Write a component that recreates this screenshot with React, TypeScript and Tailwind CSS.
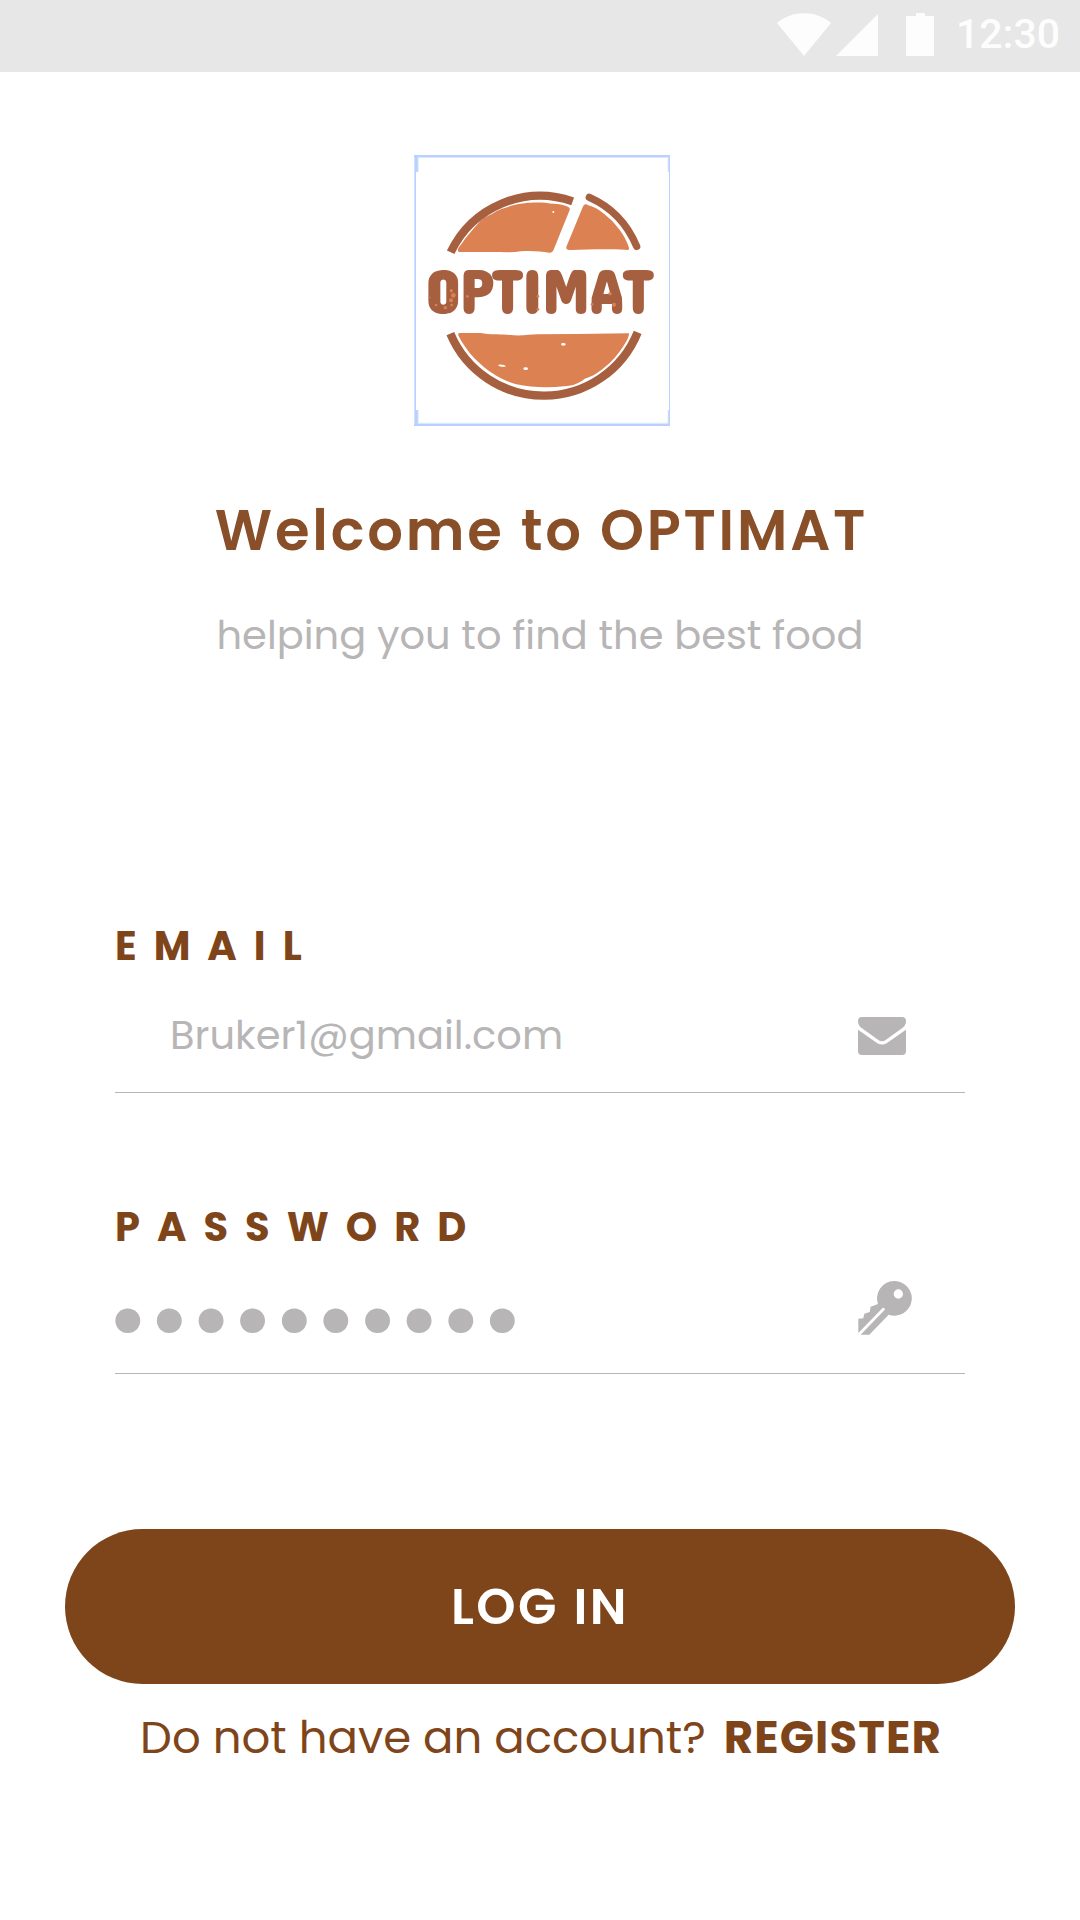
import React from "react";

function StatusBar() {
  return (
    <header className="flex h-[72px] items-center justify-end bg-[#e7e7e7] pr-5 pb-[3px] text-[#fdfdfd]">
      <svg aria-label="Wi-Fi" role="img" className="h-11 w-[54px] shrink-0" viewBox="0 0 54 44" fill="currentColor">
        <path d="M0 10C15-3 39-3 54 10L27 43Z" />
      </svg>
      <svg aria-label="Signal" role="img" className="ml-[5px] h-11 w-[42px] shrink-0" viewBox="0 0 42 44" fill="currentColor">
        <path d="M42 1V43H0Z" />
      </svg>
      <svg aria-label="Battery" role="img" className="ml-7 h-11 w-7 shrink-0" viewBox="0 0 28 44" fill="currentColor">
        <path d="M0 3H10V0H19V3H28V43H0Z" />
      </svg>
      <time className="ml-[22px] font-['Roboto',sans-serif] text-[41px] leading-none font-medium">12:30</time>
    </header>
  );
}

function Logo() {
  return (
    <svg role="img" aria-label="Optimat logo" className="h-[271px] w-64" viewBox="40 45 768 813">
      <path fill="#dbe7fd" d="M48 50H54V96H48ZM801 50H804V96H801ZM48 810H54V852H48ZM801 810H804V852H801ZM48 51H804V54H48ZM48 848H804V852H48Z" />
      <path fill="#b9d1fc" d="M40 45H808V51H40ZM40 852H808V858H40ZM41 45H46V858H41ZM805 45H808V858H805ZM41 45H51V96H41ZM803 45H808V96H803ZM41 810H51V858H41ZM803 810H808V858H803Z" />
      <g fill="#db8152">
        <path d="M174 336C168 328 175 321 183 311C196 291 209 279 222 262C235 248 244 236 260 229C280 220 292 209 310 205C330 197 350 192 372 190C390 187 415 188 435 188C452 192 466 190 484 194C496 198 510 200 507 210L460 326C457 334 453 339 445 338C420 334 390 331 360 334C340 338 320 337 300 336Z" />
        <path d="M498 318L518 270L546 202C550 192 555 191 563 196C593 204 618 227 642 251C662 274 678 299 684 321C687 329 684 331 674 329C620 326 560 328 510 330C498 330 495 326 498 318Z" />
        <path d="M178 579H240C270 585 290 582 320 584C360 590 385 583 410 583L530 582L685 580C685 590 678 605 669 617C653 642 634 664 612 682C590 701 575 709 552 716C535 730 518 737 490 739C440 744 390 742 347 733C300 720 258 691 229 662C205 640 184 608 174 588C171 582 173 579 178 579Z" />
      </g>
      <g fill="none" stroke="#a66040">
        <path strokeWidth="25" d="M150 337A297 297 0 0 1 516 184" />
        <path strokeWidth="22" strokeLinecap="round" d="M566 172C634 202 681 254 708 319" />
        <path strokeWidth="25" d="M149 581A304 304 0 0 0 711 577" />
      </g>
      <g fill="#fff">
        <ellipse cx="458" cy="216" rx="3" ry="3" />
        <ellipse cx="488" cy="613" rx="7" ry="4" />
        <ellipse cx="304" cy="677" rx="11" ry="3" transform="rotate(8 304 677)" />
        <ellipse cx="375" cy="686" rx="7" ry="4" />
      </g>
      <text
        x="417"
        y="519"
        textAnchor="middle"
        fill="#a66040"
        className="font-['Concert_One','Roboto',sans-serif] text-[185px] font-bold"
      >
        OPTIMAT
      </text>
      <g fill="#db8152">
        <circle cx="152" cy="452" r="5" />
        <circle cx="158" cy="466" r="7" />
        <circle cx="151" cy="481" r="6" />
        <circle cx="134" cy="503" r="5" />
        <circle cx="153" cy="495" r="4" />
        <circle cx="106" cy="495" r="4" />
        <circle cx="88" cy="472" r="2" />
        <circle cx="200" cy="469" r="4" />
        <circle cx="412" cy="469" r="4" />
        <circle cx="412" cy="508" r="4" />
        <circle cx="628" cy="461" r="5" />
        <circle cx="640" cy="494" r="6" />
        <circle cx="574" cy="493" r="4" />
      </g>
    </svg>
  );
}

function EnvelopeIcon() {
  return (
    <svg aria-hidden="true" className="h-10 w-12" viewBox="0 -6 144 120" fill="currentColor">
      <path d="M12 0H132A12 12 0 0 1 144 12C144 22 140 28 133 33L84 68C76 74 68 74 60 68L11 33C4 28 0 22 0 12A12 12 0 0 1 12 0Z" />
      <path d="M0 38L57 78C67 84 77 84 87 78L144 38V102A12 12 0 0 1 132 114H12A12 12 0 0 1 0 102Z" />
    </svg>
  );
}

function KeyIcon() {
  return (
    <svg aria-hidden="true" className="h-[54px] w-[54px]" viewBox="0 0 162 162" fill="currentColor">
      <path fillRule="evenodd" d="M108 0A52 52 0 1 1 92 101L34 161H8L79 88A4 4 0 0 0 73 82L1 156V113L16 112L19 98L35 93L38 77L60 69A52 52 0 0 1 108 0ZM121 25A14 14 0 1 0 121 53A14 14 0 1 0 121 25Z" />
    </svg>
  );
}

export default function App() {
  return (
    <div className="flex min-h-screen flex-col bg-white font-['Poppins','Inter',sans-serif] text-[#7f451a]">
      <StatusBar />
      <main className="flex flex-col">
        <div className="mt-[83px] flex justify-center pl-[3px]">
          <Logo />
        </div>
        <h1 className="mt-[73px] pl-[3px] text-center text-[56px] leading-[64px] font-semibold tracking-wider text-[#884f28]">
          Welcome to OPTIMAT
        </h1>
        <p className="mt-12 text-center text-[40px] leading-[48px] text-[#b7b5b6]">helping you to find the best food</p>

        <form className="mt-[263px] flex flex-col" onSubmit={(e) => e.preventDefault()}>
          <div className="mx-[115px] flex flex-col border-b border-[#b7b5b6]">
            <label htmlFor="email" className="text-[40px] leading-[48px] font-bold tracking-[17px]">
              EMAIL
            </label>
            <div className="flex h-[122px] items-center pt-2 pr-[59px] pl-[55px] text-[#b7b5b6]">
              <input id="email" type="email" defaultValue="Bruker1@gmail.com" className="min-w-0 flex-1 bg-transparent text-[40px] leading-[48px] outline-none" />
              <EnvelopeIcon />
            </div>
          </div>
          <div className="mx-[115px] mt-[110px] flex flex-col border-b border-[#b7b5b6]">
            <label htmlFor="password" className="text-[40px] leading-[48px] font-bold tracking-[17px]">
              PASSWORD
            </label>
            <div className="flex h-[122px] items-center pr-[53px] pb-2 text-[#b7b5b6]">
              <input id="password" type="password" defaultValue="optimat123" className="-ml-2 h-[100px] min-w-0 flex-1 bg-transparent pt-[22px] text-[101px] outline-none" />
              <KeyIcon />
            </div>
          </div>
          <button type="submit" className="mx-[65px] mt-[155px] h-[155px] rounded-full bg-[#7f451a] text-[50px] font-semibold tracking-wider text-white">
            LOG IN
          </button>
        </form>
        <p className="mt-7 flex items-baseline justify-center gap-[18px] pb-10 pl-[2px] text-[45px] leading-[52px]">
          Do not have an account?
          <a href="#register" className="font-bold tracking-wide">
            REGISTER
          </a>
        </p>
      </main>
    </div>
  );
}
